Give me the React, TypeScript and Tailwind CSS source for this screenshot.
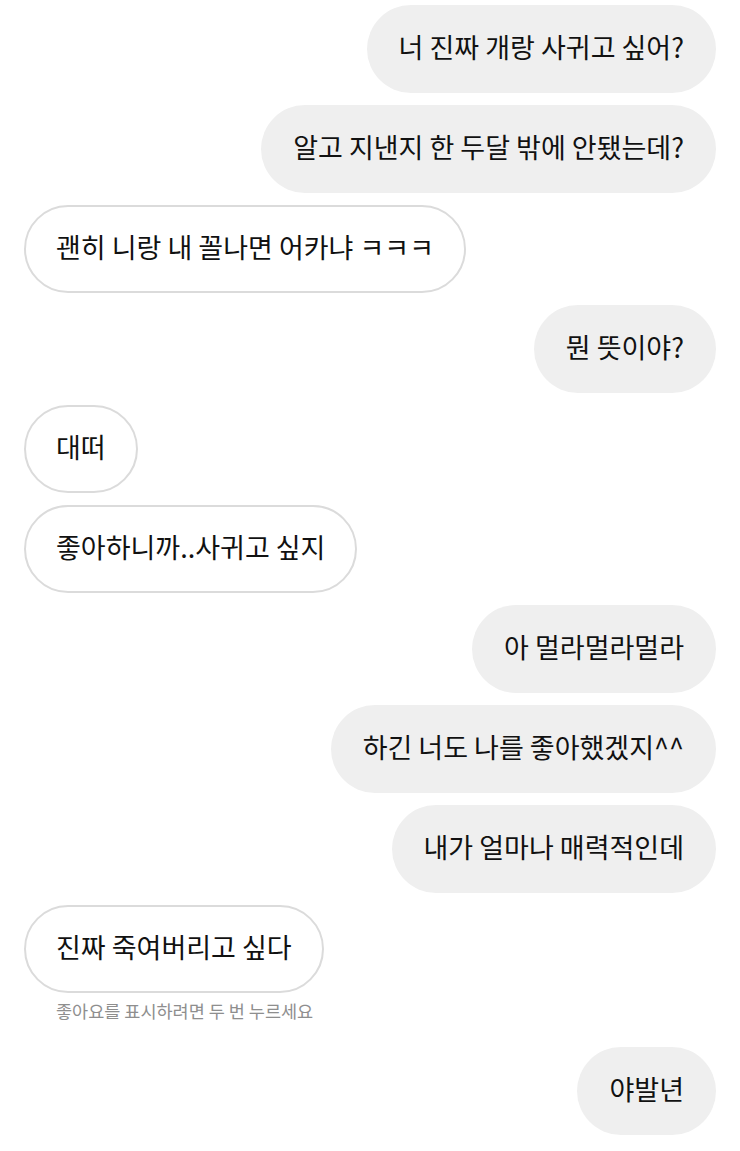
import React from 'react'

type Msg = { text: string; mine: boolean; note?: string }

const messages: Msg[] = [
  { text: '너 진짜 개랑 사귀고 싶어?', mine: true },
  { text: '알고 지낸지 한 두달 밖에 안됐는데?', mine: true },
  { text: '괜히 니랑 내 꼴나면 어카냐 ㅋㅋㅋ', mine: false },
  { text: '뭔 뜻이야?', mine: true },
  { text: '대떠', mine: false },
  { text: '좋아하니까..사귀고 싶지', mine: false },
  { text: '아 멀라멀라멀라', mine: true },
  { text: '하긴 너도 나를 좋아했겠지^^', mine: true },
  { text: '내가 얼마나 매력적인데', mine: true },
  { text: '진짜 죽여버리고 싶다', mine: false, note: '좋아요를 표시하려면 두 번 누르세요' },
  { text: '야발년', mine: true },
]

export default function App() {
  return (
    <div
      className="min-h-screen w-[740px] bg-white px-6 pt-[5px] flex flex-col gap-3"
      style={{ fontFamily: '"Noto Sans CJK KR", "Noto Sans", sans-serif' }}
    >
      {messages.map((m, i) => (
        <div key={i} className={m.mine ? 'flex flex-col items-end' : 'flex flex-col items-start'}>
          <div
            className={
              m.mine
                ? 'h-[88px] flex items-center px-8 pb-[5px] rounded-full bg-[#efefef] text-[27px] leading-none text-[#111111]'
                : 'h-[88px] flex items-center px-[30px] pb-[5px] rounded-full border-2 border-[#dbdbdb] bg-white text-[27px] leading-none text-[#111111]'
            }
          >
            {m.text}
          </div>
          {m.note && (
            <p className="pl-8 pt-[6px] pb-[12px] text-[17.5px] leading-[24px] text-[#8e8e8e]">{m.note}</p>
          )}
        </div>
      ))}
    </div>
  )
}
